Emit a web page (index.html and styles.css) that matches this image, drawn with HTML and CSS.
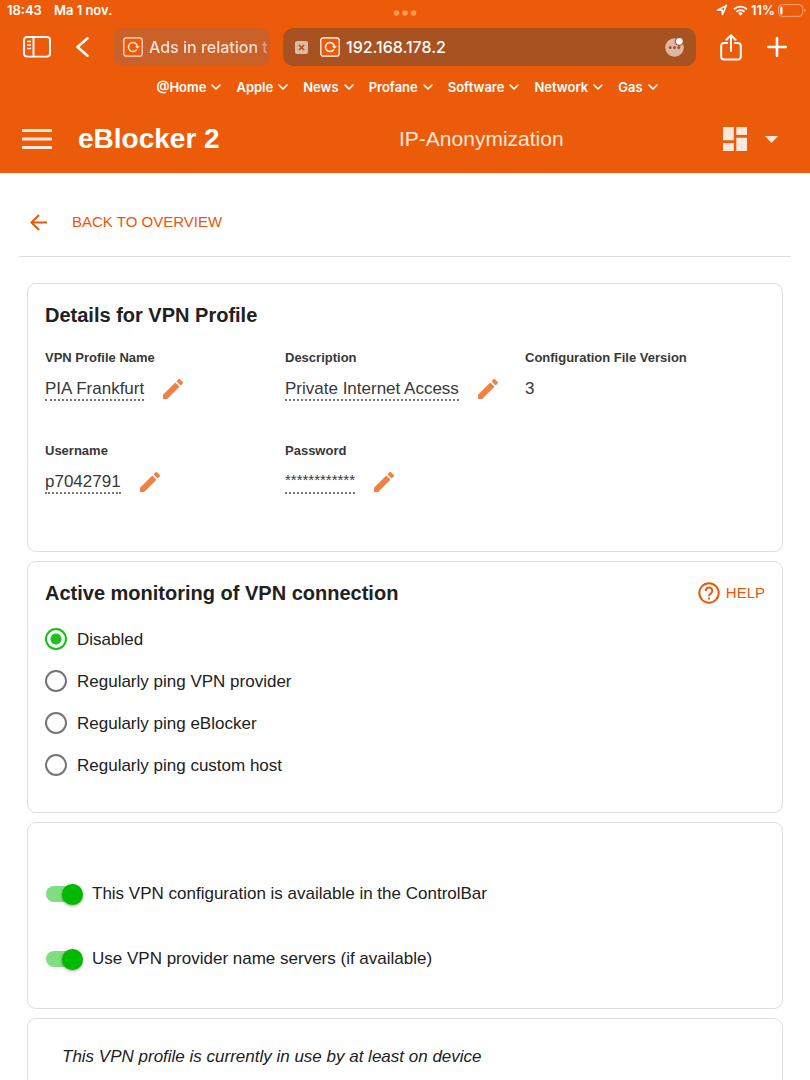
FILE: index.html
```html
<!DOCTYPE html>
<html lang="en">
<head>
<meta charset="utf-8">
<meta name="viewport" content="width=device-width, initial-scale=1">
<title>eBlocker 2</title>
<link rel="stylesheet" href="styles.css">
</head>
<body>
<svg class="defs" width="0" height="0" aria-hidden="true">
  <symbol id="pencil" viewBox="3 3 18 18"><path d="M3 17.25V21h3.75L17.81 9.94l-3.75-3.75L3 17.25zM20.71 7.04a1 1 0 0 0 0-1.41l-2.34-2.34a1 1 0 0 0-1.41 0l-1.83 1.83 3.75 3.75 1.83-1.83z"/></symbol>
  <symbol id="chevron" viewBox="0 0 10 6"><path d="M1 1l4 4 4-4" fill="none" stroke="currentColor" stroke-width="1.6" stroke-linecap="round" stroke-linejoin="round"/></symbol>
  <symbol id="favicon" viewBox="0 0 20 20"><rect x=".8" y=".8" width="18.400" height="18.400" rx="2.500" fill="#ec5b0a" stroke="currentColor" stroke-width="1.200"/><path d="M13.800 12.300A4.500 4.500 0 1 1 14.400 9.600" fill="none" stroke="currentColor" stroke-width="1.500"/><path d="M12 9.200h5l-2.500 2.600z" fill="currentColor"/></symbol>
</svg>
<div class="app">
  <header class="top">
    <div class="status">
      <span>18:43</span><span class="date">Ma 1 nov.</span>
      <svg class="dots" width="24" height="6" viewBox="0 0 24 6" fill="#ff9a4d"><circle cx="3.500" cy="3" r="2.800"/><circle cx="12" cy="3" r="2.800"/><circle cx="20.500" cy="3" r="2.800"/></svg>
      <svg class="right" width="12" height="12" viewBox="0 0 12 12"><path d="M1.500 6.200L10.500 1.300 6.500 10.500 6.200 6z" fill="none" stroke="#fff" stroke-width="1.500" stroke-linejoin="round"/></svg>
      <svg class="wifi" width="15" height="11" viewBox="0 0 15 11" fill="none" stroke="#fff" stroke-width="1.900"><path d="M1 4.200a9.500 9.500 0 0 1 13 0M3.400 6.800a6 6 0 0 1 8.200 0"/><path d="M5.200 8.300a3.300 3.300 0 0 1 4.600 0L7.500 10.700z" fill="#fff" stroke="none"/></svg>
      <span>11%</span>
      <svg class="battery" width="28" height="13" viewBox="0 0 28 13"><rect x=".6" y=".6" width="24" height="11.800" rx="3.500" fill="none" stroke="#f8a678"/><rect x="2.300" y="2.500" width="2.200" height="8" rx="1" fill="#fff"/><path d="M26.200 4.500v4a2.200 2.200 0 0 0 0-4z" fill="#f8a678"/></svg>
    </div>
    <div class="toolbar">
      <button class="plain" aria-label="Show sidebar"><svg width="28" height="22" viewBox="0 0 28 22" fill="none" stroke="#fff" stroke-width="1.900"><rect x="1" y="1" width="26" height="19.600" rx="3"/><path d="M10.500 1v19.600"/><path d="M4 5.500h4M4 9h4M4 12.500h4" stroke-width="1.300"/></svg></button>
      <button class="plain back" aria-label="Back"><svg width="13" height="20" viewBox="0 0 13 20" fill="none" stroke="#fff" stroke-width="2.600" stroke-linecap="round" stroke-linejoin="round"><path d="M11.500 1.300L1.500 10l10 8.700"/></svg></button>
      <button class="tab"><svg width="20" height="20"><use href="#favicon"/></svg><span class="tab-title">Ads in relation t</span></button>
      <div class="address">
        <button class="plain" aria-label="Close tab"><svg width="13" height="13" viewBox="0 0 13 13"><rect width="13" height="13" rx="2" fill="#dcb9a6"/><path d="M4 4l5 5M9 4l-5 5" stroke="#a85222" stroke-width="1.700"/></svg></button>
        <svg class="site" width="20" height="20"><use href="#favicon"/></svg>
        <span class="url">192.168.178.2</span>
        <button class="plain" aria-label="Page menu"><svg width="20" height="20" viewBox="0 0 20 20"><circle cx="9.500" cy="10.500" r="9.300" fill="#dcb9a6"/><g fill="#a85222"><circle cx="14.300" cy="4.300" r="4.600"/><circle cx="5.200" cy="10.500" r="1.500"/><circle cx="9.500" cy="10.500" r="1.500"/><circle cx="13.800" cy="10.500" r="1.500"/></g><circle cx="14.300" cy="4.300" r="3.400" fill="#fff"/></svg></button>
      </div>
      <button class="plain share" aria-label="Share"><svg width="22" height="27" viewBox="0 0 22 27" fill="none" stroke="#fff" stroke-width="2" stroke-linecap="round" stroke-linejoin="round"><path d="M7 9H4a2.800 2.800 0 0 0-2.800 2.800v11A2.800 2.800 0 0 0 4 25.600h14a2.800 2.800 0 0 0 2.800-2.800v-11A2.800 2.800 0 0 0 18 9h-3M11 17V1.500M6.500 5.800L11 1.300l4.500 4.500"/></svg></button>
      <button class="plain add" aria-label="New tab"><svg width="20" height="20" viewBox="0 0 20 20" stroke="#fff" stroke-width="2.600" stroke-linecap="round"><path d="M10 1.300v17.400M1.300 10h17.400"/></svg></button>
    </div>
    <nav class="bookmarks">
      <button>@Home<svg width="10" height="6"><use href="#chevron"/></svg></button>
      <button>Apple<svg width="10" height="6"><use href="#chevron"/></svg></button>
      <button>News<svg width="10" height="6"><use href="#chevron"/></svg></button>
      <button>Profane<svg width="10" height="6"><use href="#chevron"/></svg></button>
      <button>Software<svg width="10" height="6"><use href="#chevron"/></svg></button>
      <button>Network<svg width="10" height="6"><use href="#chevron"/></svg></button>
      <button>Gas<svg width="10" height="6"><use href="#chevron"/></svg></button>
    </nav>
    <div class="appbar">
      <button class="plain" aria-label="Menu"><svg width="30" height="20" viewBox="0 0 30 20" fill="#fde7da"><path d="M0 0h30v3H0zM0 8.500h30v3H0zM0 17h30v3H0z"/></svg></button>
      <h1>eBlocker 2</h1>
      <span class="section">IP-Anonymization</span>
      <button class="plain" aria-label="Dashboard"><svg width="24" height="24" viewBox="0 0 24 24" fill="#fde7da"><path d="M0 0h10.800v13.300H0zM0 16h10.800v8H0zM13.300 0H24v8H13.300zM13.300 10.700H24V24H13.300z"/></svg></button>
      <button class="plain caret" aria-label="More"><svg width="13" height="7" viewBox="0 0 13 7" fill="#fde7da"><path d="M0 0h13L6.500 7z"/></svg></button>
    </div>
  </header>
  <main>
    <div class="crumb">
      <a href="#overview"><svg width="17" height="17" viewBox="0 0 17 17" fill="none" stroke="currentColor" stroke-width="2"><path d="M17 8.500H1.500M9 1L1.500 8.500 9 16"/></svg>BACK TO OVERVIEW</a>
    </div>
    <div class="cards">
      <section class="card details">
        <h2>Details for VPN Profile</h2>
        <dl class="fields">
          <div><dt>VPN Profile Name</dt><dd><span class="editable">PIA Frankfurt</span><button class="plain edit" aria-label="Edit name"><svg width="20" height="20"><use href="#pencil"/></svg></button></dd></div>
          <div><dt>Description</dt><dd><span class="editable">Private Internet Access</span><button class="plain edit" aria-label="Edit description"><svg width="20" height="20"><use href="#pencil"/></svg></button></dd></div>
          <div><dt>Configuration File Version</dt><dd>3</dd></div>
          <div><dt>Username</dt><dd><span class="editable">p7042791</span><button class="plain edit" aria-label="Edit username"><svg width="20" height="20"><use href="#pencil"/></svg></button></dd></div>
          <div><dt>Password</dt><dd><span class="editable secret">************</span><button class="plain edit" aria-label="Edit password"><svg width="20" height="20"><use href="#pencil"/></svg></button></dd></div>
        </dl>
      </section>
      <section class="card monitor">
        <div class="card-head">
          <h2>Active monitoring of VPN connection</h2>
          <button class="plain help"><svg width="22" height="22" viewBox="0 0 22 22" fill="none" stroke="currentColor" stroke-width="2"><circle cx="11" cy="11" r="9.700"/><path d="M7.700 9a3.300 3.300 0 1 1 5.400 2.300C12 12.200 11 12.700 11 14.200"/><path d="M11 15.400v2"/></svg>HELP</button>
        </div>
        <div class="radios" role="radiogroup" aria-label="Active monitoring">
          <label><input type="radio" name="ping" checked>Disabled</label>
          <label><input type="radio" name="ping">Regularly ping VPN provider</label>
          <label><input type="radio" name="ping">Regularly ping eBlocker</label>
          <label><input type="radio" name="ping">Regularly ping custom host</label>
        </div>
      </section>
      <section class="card switches">
        <label><input type="checkbox" role="switch" checked>This VPN configuration is available in the ControlBar</label>
        <label><input type="checkbox" role="switch" checked>Use VPN provider name servers (if available)</label>
      </section>
      <section class="card usage">
        <p>This VPN profile is currently in use by at least on device</p>
      </section>
    </div>
  </main>
</div>
</body>
</html>
```
FILE: styles.css
```css
* { box-sizing: border-box; }
body {
  margin: 0;
  background: #fff;
  color: #212121;
  font: 17px/20px "Liberation Sans", Arial, sans-serif;
}
h1, h2, p, dl, dd { margin: 0; }
button { font: inherit; color: inherit; border: 0; padding: 0; background: none; }
svg { display: block; flex: none; }
.defs { position: absolute; }
.plain { display: flex; align-items: center; flex: none; }
.app { height: 100vh; display: flex; flex-direction: column; overflow: hidden; }

.top {
  flex: none;
  background: #ec5b0a;
  color: #fff;
  padding-bottom: 14px;
}
.status {
  position: relative;
  display: flex;
  align-items: center;
  height: 20px;
  padding: 0 4px 0 7px;
  font: 600 13px/20px Inter, sans-serif;
}
.date { margin-left: 12px; }
.dots { position: absolute; left: 50%; top: 10px; margin-left: -12px; }
.right { margin-left: auto; }
.wifi { margin: 0 3px 0 5px; }
.battery { margin-left: 3px; }

.toolbar {
  display: flex;
  align-items: center;
  margin-top: 8px;
  padding: 0 23px;
  font: 500 16px/20px Inter, sans-serif;
}
.back { margin: 0 24px 0 25px; }
.tab {
  display: flex;
  align-items: center;
  width: 157px;
  height: 38px;
  padding: 0 2px 0 10px;
  border-radius: 10px;
  background: #c96128;
  color: #fbe3d6;
  white-space: nowrap;
}
.tab-title {
  flex: 1;
  margin-left: 6px;
  text-align: left;
  -webkit-mask-image: linear-gradient(90deg, #000 88%, transparent 105%);
  mask-image: linear-gradient(90deg, #000 88%, transparent 105%);
}
.address {
  flex: 1;
  display: flex;
  align-items: center;
  height: 38px;
  margin-left: 13px;
  padding: 0 11px 0 12px;
  border-radius: 10px;
  background: #a85222;
}
.site { margin: 0 6px 0 12px; }
.url { flex: 1; }
.share { margin: 0 25px 0 24px; }

.bookmarks {
  display: flex;
  justify-content: center;
  gap: 15px;
  margin-top: 11px;
  padding-left: 4px;
  font: 600 13px/20px Inter, sans-serif;
}
.bookmarks button { display: flex; align-items: center; gap: 5px; }

.appbar {
  display: flex;
  align-items: center;
  height: 40px;
  margin-top: 22px;
  padding: 0 32px 0 22px;
}
.appbar h1 { margin-left: 26px; font-size: 28px; line-height: 32px; }
.section { flex: 1; padding-left: 20px; text-align: center; font-size: 21px; line-height: 24px; color: #fde7da; }
.caret { margin-left: 18px; }

main { flex: 1; min-height: 0; overflow: hidden; padding: 0 19px; }
.crumb {
  height: 84px;
  padding: 39px 11px 0;
  border-bottom: 1px solid #dedede;
}
.crumb a {
  display: flex;
  align-items: center;
  gap: 25px;
  color: #ea560a;
  font-size: 15px;
  text-decoration: none;
}
.cards { display: flex; flex-direction: column; gap: 9px; padding: 26px 8px 0; }
.card { border: 1px solid #dedede; border-radius: 9px; padding: 19px 17px; }
.card h2 { font-size: 20px; line-height: 24px; }
.card-head { display: flex; justify-content: space-between; align-items: center; }
.details { padding-bottom: 16px; }
.fields { display: grid; grid-template-columns: repeat(3, 1fr); margin-top: 22px; }
.fields > div { height: 93px; color: #383838; }
dt { font-size: 13px; line-height: 18px; font-weight: bold; }
dd { display: flex; align-items: flex-start; margin-top: 12px; }
.editable { border-bottom: 2px dotted #777; }
.secret { padding-bottom: 4px; font-size: 15px; line-height: 16px; }
.edit { margin-left: 19px; }
.edit svg { fill: #f08044; }

.monitor { padding-bottom: 36px; }
.help { gap: 6px; color: #ea560a; font-size: 15px; }
.radios { display: flex; flex-direction: column; gap: 20px; margin-top: 23px; }
.radios label { display: flex; align-items: flex-start; height: 22px; line-height: 24px; }
.radios input {
  appearance: none;
  width: 22px;
  height: 22px;
  margin: 0 10px 0 0;
  border: 2px solid #757575;
  border-radius: 50%;
}
.radios input:checked {
  border-color: #12c312;
  background: radial-gradient(circle, #1fc01f 5px, transparent 6px);
}
.switches { display: flex; flex-direction: column; gap: 43px; padding: 60px 18px 38px; }
.switches label { display: flex; align-items: center; height: 22px; }
.switches input {
  appearance: none;
  display: flex;
  align-items: center;
  width: 36px;
  height: 16px;
  margin: 0 10px 0 0;
  border-radius: 8px;
  background: #80dd80;
}
.switches input::before {
  content: "";
  flex: none;
  width: 21px;
  height: 21px;
  margin-left: 16px;
  border-radius: 50%;
  background: #00ba00;
  box-shadow: 0 1px 3px rgba(0, 0, 0, .4);
}
.usage { padding: 28px 34px 120px; font-style: italic; }
```
